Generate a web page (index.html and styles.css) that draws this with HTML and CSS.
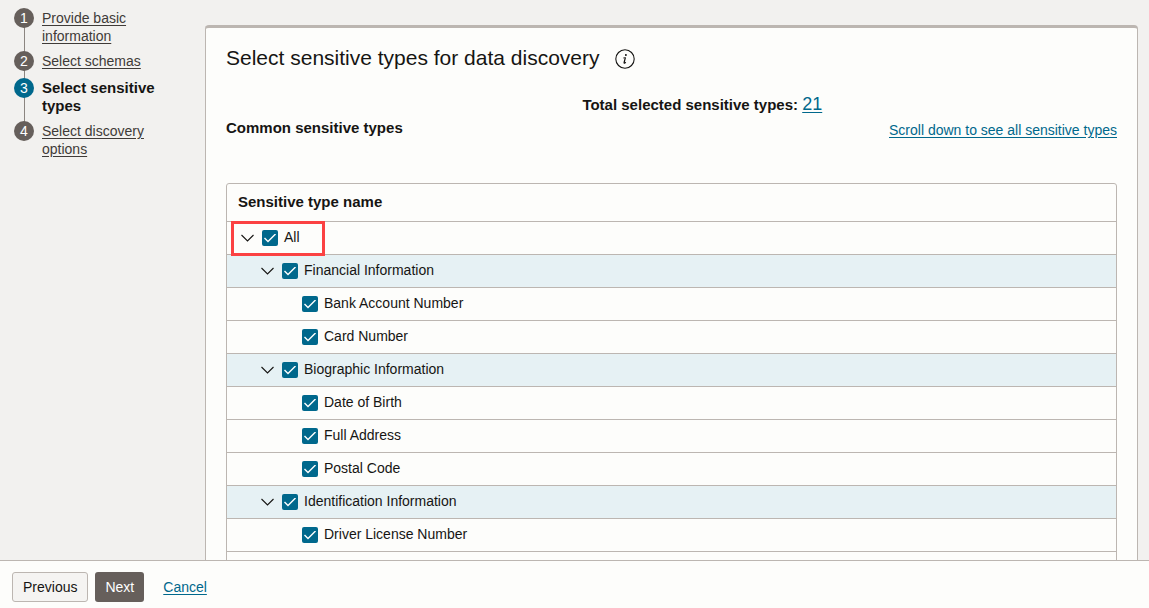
FILE: index.html
```html
<!DOCTYPE html>
<html lang="en">
<head>
<meta charset="utf-8">
<meta name="viewport" content="width=device-width, initial-scale=1">
<title>Select sensitive types</title>
<link rel="stylesheet" href="styles.css">
</head>
<body>
<svg class="defs" aria-hidden="true">
  <symbol id="chevron" viewBox="0 0 13 8"><path d="M.5 1l6 6 6-6" fill="none" stroke="currentColor" stroke-width="1.1"/></symbol>
</svg>
<div class="content">
  <nav class="train" aria-label="Progress">
    <ol class="steps">
      <li class="step"><span class="dot">1</span><a class="step-label" href="#">Provide basic information</a></li>
      <li class="step"><span class="dot">2</span><a class="step-label" href="#">Select schemas</a></li>
      <li class="step current" aria-current="step"><span class="dot">3</span><span class="step-label">Select sensitive types</span></li>
      <li class="step"><span class="dot">4</span><a class="step-label" href="#">Select discovery options</a></li>
    </ol>
  </nav>
  <main class="panel">
    <div class="title-row">
      <h1 class="title">Select sensitive types for data discovery</h1>
      <button class="info" type="button" aria-label="More information">
        <svg class="info-icon" viewBox="0 0 20 20"><circle cx="10" cy="10" r="9.2" fill="none" stroke="currentColor" stroke-width="1.1"/><circle cx="10.9" cy="6.1" r="1" fill="currentColor"/><path d="M8.2 9l2.3-.4" fill="none" stroke="currentColor" stroke-width=".8"/><path d="M10.4 8.5l-1.3 5q-.2 1 .7.6l1-.9" fill="none" stroke="currentColor" stroke-width="1.2"/></svg>
      </button>
    </div>
    <div class="summary">
      <h2 class="subtitle">Common sensitive types</h2>
      <p class="total">Total selected sensitive types: <a class="link count" href="#">21</a></p>
      <a class="link scroll" href="#">Scroll down to see all sensitive types</a>
    </div>
    <table class="types">
      <thead><tr><th class="head" scope="col">Sensitive type name</th></tr></thead>
      <tbody>
        <tr><td class="cell all"><div class="node"><button class="toggle" type="button" aria-label="Collapse All"><svg class="chevron"><use href="#chevron"/></svg></button><label class="check"><input class="box" type="checkbox" checked><span class="name">All</span></label></div></td></tr>
        <tr class="group"><td class="cell level-1"><div class="node"><button class="toggle" type="button" aria-label="Collapse Financial Information"><svg class="chevron"><use href="#chevron"/></svg></button><label class="check"><input class="box" type="checkbox" checked><span class="name">Financial Information</span></label></div></td></tr>
        <tr><td class="cell level-2"><div class="node"><label class="check"><input class="box" type="checkbox" checked><span class="name">Bank Account Number</span></label></div></td></tr>
        <tr><td class="cell level-2"><div class="node"><label class="check"><input class="box" type="checkbox" checked><span class="name">Card Number</span></label></div></td></tr>
        <tr class="group"><td class="cell level-1"><div class="node"><button class="toggle" type="button" aria-label="Collapse Biographic Information"><svg class="chevron"><use href="#chevron"/></svg></button><label class="check"><input class="box" type="checkbox" checked><span class="name">Biographic Information</span></label></div></td></tr>
        <tr><td class="cell level-2"><div class="node"><label class="check"><input class="box" type="checkbox" checked><span class="name">Date of Birth</span></label></div></td></tr>
        <tr><td class="cell level-2"><div class="node"><label class="check"><input class="box" type="checkbox" checked><span class="name">Full Address</span></label></div></td></tr>
        <tr><td class="cell level-2"><div class="node"><label class="check"><input class="box" type="checkbox" checked><span class="name">Postal Code</span></label></div></td></tr>
        <tr class="group"><td class="cell level-1"><div class="node"><button class="toggle" type="button" aria-label="Collapse Identification Information"><svg class="chevron"><use href="#chevron"/></svg></button><label class="check"><input class="box" type="checkbox" checked><span class="name">Identification Information</span></label></div></td></tr>
        <tr><td class="cell level-2"><div class="node"><label class="check"><input class="box" type="checkbox" checked><span class="name">Driver License Number</span></label></div></td></tr>
        <tr><td class="cell"></td></tr>
      </tbody>
    </table>
  </main>
</div>
<footer class="footer">
  <button class="btn" type="button">Previous</button>
  <button class="btn primary" type="button">Next</button>
  <a class="link cancel" href="#">Cancel</a>
</footer>
</body>
</html>
```
FILE: styles.css
```css
* { box-sizing: border-box; }

body {
  margin: 0;
  height: 100vh;
  display: flex;
  flex-direction: column;
  background: #f2f1ef;
  color: #161513;
  font: 14px/18px "Liberation Sans", Arial, sans-serif;
}

.defs { display: none; }

.content {
  flex: 1;
  min-height: 0;
  display: flex;
  overflow: hidden;
}

.train { flex: 0 0 205px; padding: 8px 36px 0 14px; }

.steps { list-style: none; margin: 0; padding: 0; }

.step {
  position: relative;
  display: flex;
  gap: 8px;
  padding-bottom: 6px;
}

.step:not(:last-child)::before {
  content: "";
  position: absolute;
  left: 10px;
  top: 10px;
  bottom: -10px;
  width: 1px;
  background: #8b8580;
}

.dot {
  position: relative;
  flex: none;
  width: 20px;
  height: 20px;
  border-radius: 50%;
  background: #665f5b;
  color: #fff;
  line-height: 20px;
  text-align: center;
}

.step-label { padding-top: 1px; color: #3f3b38; text-decoration: underline; text-underline-offset: 2px; }
.step:nth-child(2) { padding-bottom: 7px; }
.current .dot { background: #00688c; }
.current .step-label { color: #161513; font-size: 15px; font-weight: bold; text-decoration: none; }

.panel {
  flex: 1;
  min-width: 0;
  margin: 25px 11px 0 0;
  padding: 16px 20px 0;
  border: 1px solid #bcb6b1;
  border-top-width: 3px;
  border-bottom: 0;
  border-radius: 4px 4px 0 0;
  background: #fdfdfb;
  overflow: hidden;
}

.title-row { display: flex; align-items: center; gap: 15px; }
.title { margin: 0; font-size: 21px; line-height: 28px; font-weight: normal; }

.info { padding: 1px 0 0; border: 0; background: none; color: #161513; }
.info-icon { display: block; width: 20px; height: 20px; }

.summary {
  display: grid;
  grid-template-columns: 40% auto 1fr;
  align-items: start;
  padding: 20px 0 44px;
}

.subtitle { margin: 0; padding-top: 27px; font-size: 15px; line-height: 18px; }
.total { margin: 0; font-size: 15px; font-weight: bold; line-height: 24px; }
.count { font-size: 18px; font-weight: normal; }
.scroll { justify-self: end; padding-top: 29px; }
.link { color: #00688c; text-underline-offset: 2px; }

.types {
  width: 100%;
  border: 1px solid #bcb6b1;
  border-radius: 3px 3px 0 0;
  border-spacing: 0;
}

.head { height: 37px; padding: 0 11px 1px; font-size: 15px; text-align: left; }
.cell { height: 33px; padding: 0 14px; border-top: 1px solid #bcb6b1; }
.cell.all { padding-left: 4px; }
.level-1 { padding-left: 34px; }
.level-2 { padding-left: 75px; }
.group { background: #e6f1f4; }

.node { display: flex; align-items: center; gap: 8px; }
.all .node {
  position: relative;
  z-index: 1;
  width: 94px;
  height: 35px;
  margin: -2px 0;
  padding: 0 7px;
  border: 3px solid #fb4142;
}

.toggle { padding: 0; border: 0; background: none; color: #161513; }
.chevron { display: block; width: 13px; height: 8px; }
.check { display: flex; align-items: center; gap: 6px; }
.name { padding-bottom: 2px; }

.box {
  appearance: none;
  display: grid;
  place-items: center;
  flex: none;
  width: 16px;
  height: 16px;
  margin: 0;
  border-radius: 2px;
  background: #00688c;
}

.box:checked::before {
  content: "";
  width: 12px;
  height: 9px;
  background: #fff;
  clip-path: polygon(0 5px, 1px 4px, 4px 7px, 11px 0, 12px 1px, 4px 9px);
}

.footer {
  display: flex;
  align-items: center;
  gap: 7px;
  padding: 11px 12px 6px;
  border-top: 1px solid #bcb6b1;
  background: #fdfdfb;
}

.btn {
  height: 30px;
  padding: 0 10px;
  border: 1px solid #bcb6b1;
  border-radius: 3px;
  background: #f5f4f2;
  color: #161513;
  font: inherit;
}

.primary { border: 0; background: #665f5b; color: #fff; }
.cancel { margin-left: 12px; }
```
